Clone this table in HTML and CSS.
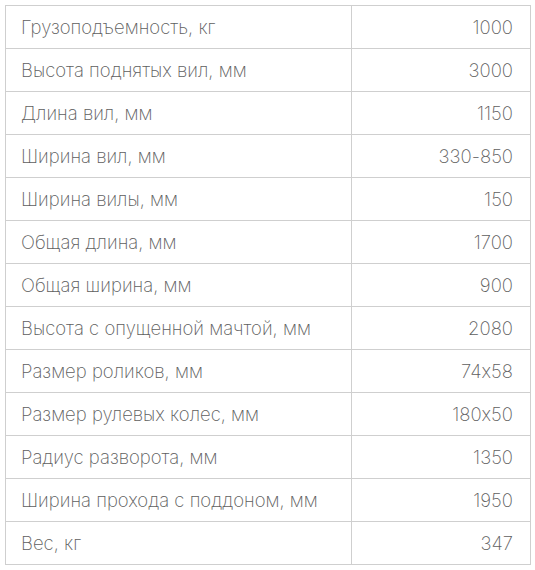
FILE: index.html
```html
<!DOCTYPE html>
<html lang="ru">
<head>
<meta charset="utf-8">
<link rel="stylesheet" href="styles.css">
</head>
<body>
<table class="specs">
<tbody>
<tr><td class="name">Грузоподъемность, кг</td><td class="val">1000</td></tr>
<tr><td class="name">Высота поднятых вил, мм</td><td class="val">3000</td></tr>
<tr><td class="name">Длина вил, мм</td><td class="val">1150</td></tr>
<tr><td class="name">Ширина вил, мм</td><td class="val">330-850</td></tr>
<tr><td class="name">Ширина вилы, мм</td><td class="val">150</td></tr>
<tr><td class="name">Общая длина, мм</td><td class="val">1700</td></tr>
<tr><td class="name">Общая ширина, мм</td><td class="val">900</td></tr>
<tr><td class="name">Высота с опущенной мачтой, мм</td><td class="val">2080</td></tr>
<tr><td class="name">Размер роликов, мм</td><td class="val">74x58</td></tr>
<tr><td class="name">Размер рулевых колес, мм</td><td class="val">180x50</td></tr>
<tr><td class="name">Радиус разворота, мм</td><td class="val">1350</td></tr>
<tr><td class="name">Ширина прохода с поддоном, мм</td><td class="val">1950</td></tr>
<tr><td class="name">Вес, кг</td><td class="val">347</td></tr>
</tbody>
</table>
</body>
</html>
```
FILE: styles.css
```css
html, body {
  margin: 0;
  padding: 0;
  background: #fff;
}
body {
  padding: 5px;
}
.specs {
  border-collapse: collapse;
  width: 526px;
}
.specs td {
  font-family: Inter, "Open Sans", sans-serif;
  font-weight: 200;
  font-size: 18.5px;
  font-feature-settings: "calt" 0;
  color: #5e5e5e;
  border: 1px solid #cfcfcf;
  height: 43px;
  padding: 0 17px 0 15px;
  box-sizing: border-box;
  vertical-align: middle;
  line-height: 22px;
}
.specs .name {
  width: 346px;
}
.specs .val {
  text-align: right;
}
```
